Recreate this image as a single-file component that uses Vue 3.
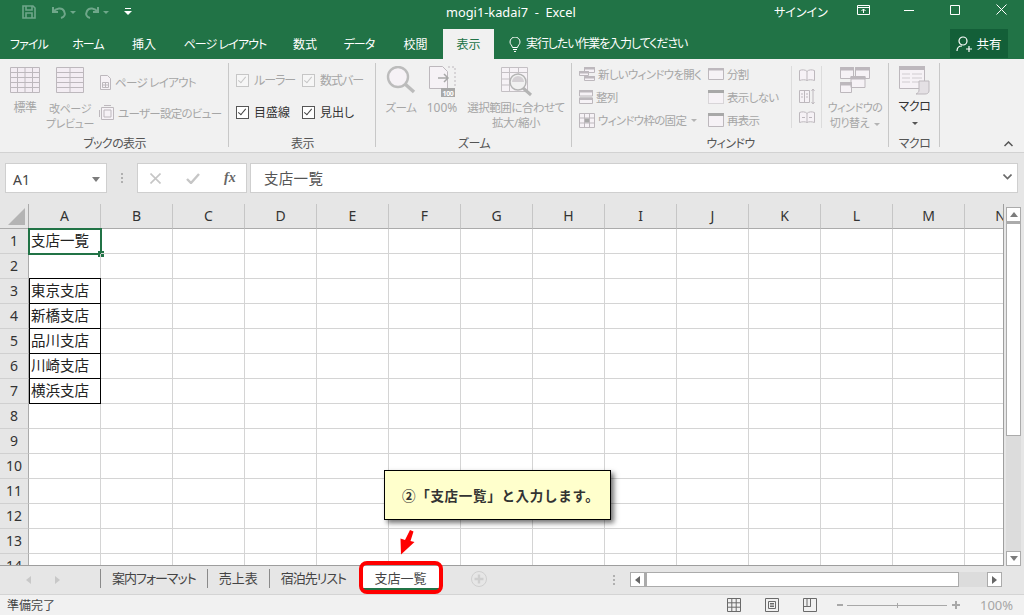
<template>
  <div class="window">
    <!-- title bar -->
    <div class="titlebar">
      <div class="qat">
        <svg class="qat-save" width="16" height="16" viewBox="0 0 16 16" fill="none" stroke="#6fa78a" stroke-width="1.6">
          <path d="M2 2h10l2 2v10H2z" />
          <path d="M5 2v4h6V2M5 14V9h6v5" />
        </svg>
        <svg class="qat-undo" width="16" height="14" viewBox="0 0 16 14" fill="none" stroke="#6fa78a" stroke-width="2">
          <path d="M2 2v5h5M2 7c3-4 9-5 11-1s0 6-3 7" />
        </svg>
        <span class="qat-caret"></span>
        <svg class="qat-redo" width="16" height="14" viewBox="0 0 16 14" fill="none" stroke="#6fa78a" stroke-width="2">
          <path d="M14 2v5H9M14 7c-3-4-9-5-11-1s0 6 3 7" />
        </svg>
        <span class="qat-caret"></span>
        <svg class="qat-more" width="8" height="8" viewBox="0 0 8 8" fill="#fff">
          <path d="M1 0h6v1H1zM0 3h8L4 7z" />
        </svg>
      </div>
      <div class="doc-title">mogi1-kadai7&nbsp; -&nbsp; Excel</div>
      <div class="signin">サインイン</div>
      <div class="win-buttons">
        <svg width="13" height="10" viewBox="0 0 13 10" fill="none" stroke="#fff">
          <path d="M.5.5h12v9H.5zM.5 2.5h12M6.5 8V4M4.5 6l2-2 2 2" />
        </svg>
        <svg class="win-min" width="11" height="10" viewBox="0 0 11 10" stroke="#fff"><path d="M0 5.5h10" /></svg>
        <svg class="win-max" width="10" height="10" viewBox="0 0 10 10" fill="none" stroke="#fff"><path d="M.5.5h9v9h-9z" /></svg>
        <svg class="win-close" width="11" height="11" viewBox="0 0 11 11" stroke="#fff"><path d="M.5.5l10 10M10.5.5l-10 10" /></svg>
      </div>
    </div>

    <!-- ribbon tabs -->
    <div class="tabs">
      <div
        v-for="t in ribbonTabs"
        :key="t.name"
        class="tab"
        :class="{ active: t.active, kana: t.kana }"
        :style="{ width: t.w + 'px' }"
      >{{ t.name }}</div>
      <svg class="bulb" width="12" height="15" viewBox="0 0 12 15" fill="none" stroke="#fff">
        <path d="M3.5 10.5C3 8 1 7.5 1 5a5 5 0 0 1 10 0c0 2.5-2 3-2.500 5.5zM4 12.5h4M5 14.5h2" />
      </svg>
      <div class="tell-me">実行したい作業を入力してください</div>
      <div class="share">
        <svg width="16" height="16" viewBox="0 0 16 16" fill="none" stroke="#fff" stroke-width="1.2">
          <circle cx="7" cy="5" r="4" />
          <path d="M1 15c0-3 2-5 5-5M10 13h6M13 10v6" />
        </svg>
        <span>共有</span>
      </div>
    </div>

    <!-- ribbon -->
    <div class="ribbon">
      <div class="group g-book">
        <div class="group-body">
          <div class="big b-normal">
            <svg width="30" height="26" viewBox="0 0 30 26" fill="#f3edf3" stroke="#bdb8bd">
              <path d="M.5.5h29v25H.5zM.5 5.500h29M.5 10.500h29M.5 15.500h29M.5 20.500h29M7.500.5v25M15 .5v25M22.500.5v25" />
            </svg>
            <span>標準</span>
          </div>
          <div class="big b-break">
            <svg width="28" height="26" viewBox="0 0 28 26" fill="#f3edf3" stroke="#bdb8bd">
              <path d="M.5.5h27v25H.5zM.5 5.500h27M.5 10.500h27M.5 15.500h27M.5 20.500h27M14 .5v25" />
            </svg>
            <span>改ページ<br />プレビュー</span>
          </div>
          <div class="small-col book-col">
            <div class="small">
              <svg width="13" height="15" viewBox="0 0 13 15" fill="#f6f2f6" stroke="#bdb8bd">
                <path d="M1.500.5h7l3 3v11h-10zM3.500 7.500h6v5h-6zM6.500 7.500v5M3.500 10h6" />
              </svg>
              <span>ページ レイアウト</span>
            </div>
            <div class="small">
              <svg width="16" height="16" viewBox="0 0 16 16" fill="#f6f2f6" stroke="#bdb8bd">
                <path d="M2.500 2.500h12v12h-12zM5 5h7v7H5zM.5 5v7M5 .5h7" />
              </svg>
              <span>ユーザー設定のビュー</span>
            </div>
          </div>
        </div>
        <div class="group-label">ブックの表示</div>
      </div>

      <div class="group g-show">
        <div class="group-body check-grid">
          <div class="check off"><i></i><span>ルーラー</span></div>
          <div class="check off"><i></i><span>数式バー</span></div>
          <div class="check"><i></i><span>目盛線</span></div>
          <div class="check"><i></i><span>見出し</span></div>
        </div>
        <div class="group-label">表示</div>
      </div>

      <div class="group g-zoom">
        <div class="group-body">
          <div class="big b-zoom">
            <svg width="30" height="28" viewBox="0 0 30 28" fill="#f6f2f6" stroke="#bcbcbc">
              <circle cx="12" cy="11" r="10" stroke-width="2.4" />
              <path d="M19 18l9 8" stroke-width="3.4" />
            </svg>
            <span>ズーム</span>
          </div>
          <div class="big b-hundred">
            <svg width="27" height="31" viewBox="0 0 27 31" fill="#f6f2f6" stroke="#bdb8bd">
              <path d="M.5.5h13l5 5v17H.5z" />
              <path d="M19 1h7v20" fill="none" stroke-dasharray="2 2" />
              <path d="M9 12h10M15 8l4 4-4 4" fill="none" stroke="#a8a8a8" stroke-width="1.5" />
              <rect x="12" y="22" width="14" height="9" fill="#a8a8a8" stroke="none" />
              <text x="19" y="29.5" text-anchor="middle" class="mini-num">100</text>
            </svg>
            <span>100%</span>
          </div>
          <div class="big b-fit">
            <svg width="32" height="30" viewBox="0 0 32 30" fill="#f6f2f6" stroke="#c4c0c4">
              <path d="M.5.5h26v24H.5zM.5 5.500h26M.5 12h8M.5 18h8M8.500.5v24M17.500.5v6" />
              <circle cx="17" cy="15" r="8" fill="#f1f1f1" stroke="#b4b4b4" stroke-width="1.5" />
              <path d="M11 15a6 6 0 0 1 12 0z" fill="#d4d0d4" stroke="none" />
              <path d="M22 21l8 7" stroke="#b4b4b4" stroke-width="3" />
            </svg>
            <span>選択範囲に合わせて<br />拡大/縮小</span>
          </div>
        </div>
        <div class="group-label">ズーム</div>
      </div>

      <div class="group g-window">
        <div class="group-body">
          <div class="small-col win-col-a">
            <div class="small">
              <svg width="16" height="14" viewBox="0 0 16 14" fill="#f6f2f6" stroke="#bdb8bd">
                <path d="M5.500.5h10v5h-10zM.5 4.500h9v4h-9zM5.500 9.500h10v4h-10z" />
                <path d="M5.500.5h10V2h-10zM.5 4.500h9V6h-9zM5.500 9.500h10V11h-10z" fill="#bdb8bd" />
              </svg>
              <span>新しいウィンドウを開く</span>
            </div>
            <div class="small">
              <svg width="14" height="14" viewBox="0 0 14 14" fill="#f6f2f6" stroke="#bdb8bd">
                <path d="M.5.5h13V6H.5zM.5 8h13v5.500H.5z" />
                <path d="M.5.5h13V2H.5zM.5 8h13v1.500H.5z" fill="#bdb8bd" />
              </svg>
              <span>整列</span>
            </div>
            <div class="small">
              <svg width="16" height="15" viewBox="0 0 16 15" fill="#f6f2f6" stroke="#bdb8bd">
                <path d="M.5.5h15v14H.5zM.5 5h15M.5 10h15M5.500.5v14M10.500.5v14" />
                <rect x="6" y="5.5" width="4" height="4" fill="#a8a8a8" stroke="none" />
              </svg>
              <span>ウィンドウ枠の固定</span>
              <b class="caret"></b>
            </div>
          </div>
          <div class="small-col win-col-b">
            <div class="small">
              <svg width="16" height="12" viewBox="0 0 16 12" fill="#f6f2f6" stroke="#bdb8bd">
                <path d="M.5.5h15v11H.5z" />
                <path d="M.5.5h15V2H.5z" fill="#bdb8bd" />
              </svg>
              <span>分割</span>
            </div>
            <div class="small">
              <svg width="16" height="14" viewBox="0 0 16 14" fill="#f6f2f6" stroke="#bdb8bd">
                <path d="M.5 3.500v10h15v-10" stroke-dasharray="1 1" />
                <rect x="0" y="0" width="16" height="3" fill="#a8a8a8" stroke="none" />
              </svg>
              <span>表示しない</span>
            </div>
            <div class="small">
              <svg width="16" height="14" viewBox="0 0 16 14" fill="#f6f2f6" stroke="#bdb8bd">
                <path d="M.5.5h15v13H.5z" />
                <rect x="0" y="0" width="16" height="3" fill="#a8a8a8" stroke="none" />
              </svg>
              <span>再表示</span>
            </div>
          </div>
          <div class="mini-col">
            <svg width="16" height="12" viewBox="0 0 16 12" fill="#f6f2f6" stroke="#bdb8bd">
              <path d="M8 2.500C6.500.5 3 .5.500 1.500v10C3 10.500 6.500 10.500 8 11.500c1.500-1 5-1 7.500 0v-10C13 .5 9.500.5 8 2.500zM8 2.500v9" />
            </svg>
            <svg width="16" height="17" viewBox="0 0 16 17" fill="#f6f2f6" stroke="#bdb8bd">
              <path d="M.5 2.500h10v12H.5zM5.500 2.500v12M2 6h2M7 6h2M2 9h2M7 9h2M14 1v15M12.500 3L14 1l1.500 2M12.500 14l1.500 2 1.500-2" />
            </svg>
            <svg width="16" height="12" viewBox="0 0 16 12" fill="#f6f2f6" stroke="#bdb8bd">
              <path d="M8 2.500C6.500.5 3 .5.500 1.500v10C3 10.500 6.500 10.500 8 11.500c1.500-1 5-1 7.500 0v-10C13 .5 9.500.5 8 2.500zM8 2.500v9M3 6.500h3M10 6.500h3" />
            </svg>
          </div>
          <div class="big b-switch">
            <svg width="30" height="26" viewBox="0 0 30 26" fill="#f6f2f6" stroke="#bdb8bd">
              <path d="M.5.5h13v11H.5zM15.500.5h14v11h-14zM.5 15.500h11v10H.5zM11 9.500h14v11H11z" />
              <path d="M.5.5h13V3H.5zM15.500.5h14V3h-14zM.5 15.500h11V18H.5zM11 9.500h14V12H11z" fill="#bdb8bd" />
            </svg>
            <span>ウィンドウの<br />切り替え<b class="caret"></b></span>
          </div>
        </div>
        <div class="group-label">ウィンドウ</div>
      </div>

      <div class="group g-macro">
        <div class="group-body">
          <div class="big b-macro">
            <svg width="31" height="29" viewBox="0 0 31 29" fill="#f6f2f6" stroke="#bdb8bd">
              <path d="M.5.5h25v22H.5z" />
              <rect x="0" y="0" width="26" height="4" fill="#bdb8bd" stroke="none" />
              <path d="M3 8h8M13 8h10M3 12h8M13 12h10M3 16h8M13 16h10" stroke="#d0ccd0" />
              <path d="M20 15h10v10c0 2-2 3-4 3h-9c2-1 3-2 3-4z" fill="#e4e0e4" />
            </svg>
            <span class="dark">マクロ</span>
            <b class="caret dark-caret"></b>
          </div>
        </div>
        <div class="group-label">マクロ</div>
      </div>

      <svg class="collapse" width="9" height="6" viewBox="0 0 9 6" fill="none" stroke="#555" stroke-width="1.5"><path d="M.5 5l4-4 4 4" /></svg>
    </div>

    <!-- formula bar -->
    <div class="formula-bar">
      <div class="name-box">
        <span>A1</span>
        <b class="caret big-caret"></b>
      </div>
      <div class="dots"><i></i><i></i><i></i></div>
      <div class="fx-box">
        <svg width="11" height="11" viewBox="0 0 11 11" stroke="#c6c6c6" stroke-width="1.6"><path d="M.5.5l10 10M10.5.5l-10 10" /></svg>
        <svg width="14" height="11" viewBox="0 0 14 11" fill="none" stroke="#c6c6c6" stroke-width="2.4"><path d="M1 6l4 4 8-9" /></svg>
        <span class="fx">fx</span>
      </div>
      <div class="formula-input">
        <span>支店一覧</span>
        <svg width="9" height="6" viewBox="0 0 9 6" fill="none" stroke="#6a6a6a" stroke-width="1.6"><path d="M.5.5l4 4 4-4" /></svg>
      </div>
    </div>

    <!-- sheet -->
    <div class="sheet-area">
      <div class="sheet">
        <div class="corner"><i></i></div>
        <div v-for="c in columns" :key="c" class="col-head">{{ c }}</div>
        <template v-for="(row, i) in rows" :key="i">
          <div class="row-head">{{ i + 1 }}</div>
          <div
            v-for="(c, j) in columns"
            :key="c"
            class="cell"
            :class="{ boxed: j === 0 && row !== '' && i > 0 }"
          >
            <template v-if="j === 0">{{ row }}</template>
            <div v-if="j === 0 && i === 0" class="selection"><b></b></div>
          </div>
        </template>
      </div>
      <div class="v-scroll">
        <div class="v-btn"><b class="tri-up"></b></div>
        <div class="v-thumb"></div>
        <div class="v-track"></div>
        <div class="v-btn"><b class="caret big-caret"></b></div>
      </div>
      <div class="callout">②「支店一覧」と入力します。</div>
      <svg class="red-arrow" width="16" height="25" viewBox="0 0 16 25" fill="#ff0000">
        <path d="M11 0l3.500 1.500-3 9.500 4 1L2 24.500 1.500 8.500 6 10z" />
      </svg>
    </div>

    <!-- sheet tabs -->
    <div class="sheet-tabs">
      <div class="nav">
        <b class="tri-left"></b>
        <b class="tri-right"></b>
      </div>
      <div v-for="s in sheets" :key="s.name" class="sheet-tab" :class="{ kana: s.kana }">{{ s.name }}</div>
      <div class="sheet-tab current">支店一覧</div>
      <svg class="add" width="16" height="16" viewBox="0 0 16 16" fill="none" stroke="#cfcfcf">
        <circle cx="8" cy="8" r="7.5" />
        <path d="M8 3.500v9M3.500 8h9" stroke-width="2.4" />
      </svg>
      <div class="dots tab-dots"><i></i><i></i><i></i></div>
      <div class="h-scroll">
        <div class="h-btn"><b class="tri-left"></b></div>
        <div class="h-thumb"></div>
        <div class="h-track"></div>
        <div class="h-btn"><b class="tri-right"></b></div>
      </div>
      <div class="red-box"></div>
    </div>

    <!-- status bar -->
    <div class="status">
      <span class="ready">準備完了</span>
      <div class="status-right">
        <svg width="14" height="14" viewBox="0 0 14 14" fill="none" stroke="#6a6a6a">
          <path d="M.5.5h13v13H.5zM.5 4.800h13M.5 9.200h13M4.800.5v13M9.200.5v13" />
        </svg>
        <svg width="14" height="14" viewBox="0 0 14 14" fill="none" stroke="#6a6a6a">
          <path d="M.5.5h13v13H.5zM3.500 3.500h7v7h-7zM5 5.500h4M5 7h4M5 8.500h4" />
        </svg>
        <svg width="14" height="14" viewBox="0 0 14 14" fill="none" stroke="#6a6a6a">
          <path d="M.5.5h13v13H.5zM.5 8.500h7V.5M7.500.5v8M4 .5v8" />
        </svg>
        <div class="zoom-slider">
          <i class="minus"></i>
          <div class="track"><b></b></div>
          <i class="plus"></i>
        </div>
        <span class="percent">100%</span>
      </div>
    </div>
  </div>
</template>

<script setup>
const ribbonTabs = [
  { name: 'ファイル', w: 58, kana: true },
  { name: 'ホーム', w: 60, kana: true },
  { name: '挿入', w: 52 },
  { name: 'ページ レイアウト', w: 110, kana: true },
  { name: '数式', w: 50 },
  { name: 'データ', w: 58, kana: true },
  { name: '校閲', w: 55 },
  { name: '表示', w: 51, active: true }
]

const columns = ['A', 'B', 'C', 'D', 'E', 'F', 'G', 'H', 'I', 'J', 'K', 'L', 'M', 'N']

const rows = ['支店一覧', '', '東京支店', '新橋支店', '品川支店', '川崎支店', '横浜支店', '', '', '', '', '', '', '']

const sheets = [
  { name: '案内フォーマット', kana: true },
  { name: '売上表' },
  { name: '宿泊先リスト', kana: true }
]
</script>

<style>
html, body {
  margin: 0;
  overflow: hidden;
}
</style>

<style scoped>
.window {
  width: 1024px;
  height: 615px;
  display: flex;
  flex-direction: column;
  position: relative;
  overflow: hidden;
  font-family: "Noto Sans", "Noto Sans CJK JP", sans-serif;
  font-size: 12px;
  color: #444;
  background: #e6e6e6;
}

/* title bar */
.titlebar {
  height: 29px;
  flex: none;
  background: #217346;
  color: #fff;
  display: flex;
  align-items: center;
}
.qat {
  width: 446px;
  display: flex;
  align-items: center;
  padding-left: 21px;
  box-sizing: border-box;
  margin-top: -5px;
}
.qat-undo {
  margin-left: 14px;
}
.qat-redo {
  margin-left: 8px;
}
.qat-caret {
  width: 0;
  height: 0;
  border: 3px solid transparent;
  border-top-color: #6fa78a;
  border-bottom: 0;
  margin-left: 3px;
}
.qat-more {
  margin-left: 15px;
}
.doc-title {
  width: 328px;
  font-size: 12.8px;
  margin-top: -5px;
}
.signin {
  width: 83px;
  font-size: 12px;
  margin-top: -6px;
  font-feature-settings: "palt";
}
.win-buttons {
  display: flex;
  align-items: center;
  margin-top: -10px;
}
.win-min {
  margin-left: 34px;
}
.win-max {
  margin-left: 35px;
}
.win-close {
  margin-left: 36px;
}

/* ribbon tabs */
.tabs {
  height: 30px;
  flex: none;
  background: #217346;
  color: #fff;
  display: flex;
  align-items: flex-end;
  font-size: 12px;
  font-feature-settings: "palt";
}
.tab {
  height: 30px;
  display: flex;
  align-items: center;
  justify-content: center;
  flex: none;
  box-sizing: border-box;
}
.tab.kana {
  letter-spacing: -0.9px;
}
.tab.active {
  background: #f1f1f1;
  color: #217346;
}
.bulb {
  margin-left: 15px;
  margin-bottom: 7px;
  flex: none;
}
.tell-me {
  margin-left: 5px;
  height: 30px;
  line-height: 30px;
  white-space: nowrap;
  width: 424px;
  flex: none;
  letter-spacing: -1.1px;
}
.share {
  width: 58px;
  height: 29px;
  background: #135f38;
  display: flex;
  align-items: center;
  justify-content: center;
  gap: 4px;
  margin-bottom: 1px;
  font-size: 12.5px;
  flex: none;
}

/* ribbon */
.ribbon {
  height: 94px;
  flex: none;
  box-sizing: border-box;
  background: #f1f1f1;
  border-bottom: 1px solid #d2d2d2;
  display: flex;
  position: relative;
  font-size: 11px;
  letter-spacing: -0.4px;
  color: #a6a6a6;
  font-feature-settings: "palt";
}
.group {
  flex: none;
  display: flex;
  flex-direction: column;
  position: relative;
  box-sizing: border-box;
  padding-top: 4px;
}
.group::after {
  content: "";
  position: absolute;
  right: 0;
  top: 4px;
  bottom: 5px;
  width: 1px;
  background: #c8c8c8;
}
.g-book { width: 229px; }
.g-show { width: 147px; }
.g-zoom { width: 196px; }
.g-window { width: 317px; }
.g-macro { width: 51px; }
.group-body {
  flex: 1;
  display: flex;
  min-height: 0;
}
.group-label {
  height: 18px;
  padding-top: 2px;
  line-height: 19px;
  text-align: center;
  color: #555;
  font-size: 12px;
  letter-spacing: -0.6px;
}
.big {
  display: flex;
  flex-direction: column;
  align-items: center;
  text-align: center;
  line-height: 15px;
  flex: none;
}
.big span {
  white-space: nowrap;
}
.big svg {
  flex: none;
}
.b-normal {
  width: 30px;
  margin-left: 10px;
  padding-top: 4px;
}
.b-normal span { margin-top: 7px; font-size: 12px; }
.b-break {
  width: 44px;
  margin-left: 8px;
  padding-top: 4px;
}
.b-break span { margin-top: 8px; }
.small-col {
  display: flex;
  flex-direction: column;
}
.small {
  display: flex;
  align-items: center;
  white-space: nowrap;
  height: 22px;
  flex: none;
  font-size: 11.5px;
  letter-spacing: -0.7px;
}
.book-col {
  margin-left: 7px;
  padding-top: 8px;
  gap: 9px;
}
.book-col .small svg {
  margin-right: 3px;
}
.check-grid {
  display: grid;
  grid-template-columns: 66px 66px;
  grid-auto-rows: 32px;
  padding: 8px 0 0 7px;
  box-sizing: border-box;
  color: #333;
}
.check {
  display: flex;
  align-items: flex-start;
  gap: 5px;
  line-height: 14px;
  padding-top: 3px;
  white-space: nowrap;
  font-size: 12px;
  letter-spacing: 0;
}
.check i {
  width: 13px;
  height: 13px;
  flex: none;
  box-sizing: border-box;
  border: 1px solid #555;
  background: #fff;
  position: relative;
}
.check i::after {
  content: "";
  position: absolute;
  left: 3px;
  top: 0;
  width: 4px;
  height: 8px;
  box-sizing: border-box;
  border: solid #444;
  border-width: 0 1.5px 1.5px 0;
  transform: rotate(40deg);
}
.check.off {
  color: #a6a6a6;
  letter-spacing: -1px;
}
.check.off i {
  border-color: #c6c6c6;
  background: #f6f6f6;
}
.check.off i::after {
  border-color: #c6c6c6;
}
.b-zoom {
  width: 30px;
  margin-left: 10px;
  padding-top: 3px;
}
.b-zoom span { margin-top: 6px; font-size: 11.5px; }
.b-hundred {
  width: 32px;
  margin-left: 10px;
  padding-top: 3px;
}
.b-hundred span { margin-top: 3px; font-size: 12px; letter-spacing: 0; }
.mini-num {
  font-size: 7px;
  fill: #fff;
  stroke: none;
  font-weight: 700;
}
.b-fit {
  width: 100px;
  margin-left: 8px;
  padding-top: 4px;
}
.b-fit svg { margin-left: 2px; }
.b-fit span { margin-top: 3px; font-size: 11.5px; letter-spacing: -0.5px; }
.win-col-a {
  width: 129px;
  margin-left: 7px;
  gap: 1px;
}
.win-col-a .small svg,
.win-col-b .small svg {
  margin-right: 3px;
  flex: none;
}
.win-col-b {
  width: 84px;
  gap: 1px;
}
.caret {
  display: inline-block;
  width: 0;
  height: 0;
  border: 3px solid transparent;
  border-top-color: #b4b4b4;
  border-bottom: 0;
  margin-left: 5px;
  vertical-align: middle;
}
.mini-col {
  width: 31px;
  margin-left: -1px;
  box-sizing: border-box;
  border-left: 1px solid #dcdcdc;
  border-right: 1px solid #dcdcdc;
  display: flex;
  flex-direction: column;
  align-items: center;
  justify-content: space-between;
  padding: 3px 0 5px;
  height: 62px;
  margin-top: 3px;
}
.b-switch {
  width: 66px;
  padding-top: 4px;
}
.b-switch span { margin-top: 7px; }
.b-macro {
  width: 51px;
  padding-top: 3px;
}
.b-macro span { margin-top: 4px; font-size: 12px; }
.b-macro .dark {
  color: #333;
}
.dark-caret {
  border-top-color: #555;
  margin: 8px 0 0;
}
.collapse {
  position: absolute;
  right: 11px;
  bottom: 5px;
}

/* formula bar */
.formula-bar {
  height: 51px;
  flex: none;
  box-sizing: border-box;
  padding: 10px 6px 11px 5px;
  display: flex;
  font-size: 13px;
}
.name-box,
.fx-box,
.formula-input {
  box-sizing: border-box;
  height: 30px;
  background: #fff;
  border: 1px solid #cfcfcf;
  display: flex;
  align-items: center;
}
.name-box {
  width: 102px;
  padding: 2px 6px 0 7px;
  justify-content: space-between;
  font-family: "Noto Sans", sans-serif;
  font-size: 14px;
  color: #444;
}
.big-caret {
  border-width: 5px 4px 0;
  border-top-color: #7c7c7c;
  margin: 0;
}
.dots {
  width: 30px;
  display: flex;
  flex-direction: column;
  align-items: center;
  justify-content: center;
  gap: 2px;
}
.dots i {
  width: 2px;
  height: 2px;
  background: #b0b0b0;
}
.fx-box {
  width: 110px;
  padding-left: 12px;
  gap: 25px;
}
.fx {
  font-family: "Liberation Serif", serif;
  font-style: italic;
  font-weight: 700;
  font-size: 14px;
  color: #666;
  margin-left: -1px;
}
.formula-input {
  flex: 1;
  margin-left: 3px;
  padding: 0 5px 2px 13px;
  justify-content: space-between;
  color: #555;
  font-size: 14.5px;
  letter-spacing: 0.3px;
}

/* sheet */
.sheet-area {
  height: 362px;
  flex: none;
  display: flex;
  position: relative;
}
.sheet {
  width: 1004px;
  flex: none;
  height: 362px;
  overflow: hidden;
  display: grid;
  grid-template-columns: 29px repeat(14, 72px);
  grid-auto-rows: 25px;
  background: #fff;
  font-size: 14px;
  color: #222;
  border-right: 1px solid #9e9e9e;
  border-bottom: 1px solid #9e9e9e;
  box-sizing: border-box;
}
.corner {
  background: #e6e6e6;
  border-bottom: 1px solid #ababab;
  border-right: 1px solid #ababab;
  box-sizing: border-box;
  position: relative;
}
.corner i {
  position: absolute;
  right: 3px;
  bottom: 3px;
  width: 0;
  height: 0;
  border-style: solid;
  border-width: 0 0 17px 17px;
  border-color: transparent transparent #b4b4b4 transparent;
}
.col-head {
  background: #e6e6e6;
  border-right: 1px solid #c6c6c6;
  border-bottom: 1px solid #ababab;
  box-sizing: border-box;
  text-align: center;
  line-height: 24px;
  font-family: "Noto Sans", sans-serif;
  font-size: 14px;
  color: #333;
  white-space: nowrap;
}
.row-head {
  background: #e6e6e6;
  border-right: 1px solid #ababab;
  border-bottom: 1px solid #d0d0d0;
  box-sizing: border-box;
  text-align: center;
  line-height: 24px;
  font-family: "Noto Sans", sans-serif;
  color: #333;
}
.cell {
  border-right: 1px solid #d4d4d4;
  border-bottom: 1px solid #d4d4d4;
  box-sizing: border-box;
  line-height: 23px;
  padding-left: 2px;
  white-space: nowrap;
  position: relative;
  font-size: 14.5px;
}
.cell.boxed {
  border: solid #000;
  border-width: 0 1px 1px 1px;
  box-shadow: 0 -1px 0 #000;
  padding-left: 1px;
}
.selection {
  position: absolute;
  left: -1px;
  top: -1px;
  width: 74px;
  height: 27px;
  box-sizing: border-box;
  border: 2px solid #217346;
}
.selection b {
  position: absolute;
  right: -4px;
  bottom: -4px;
  width: 6px;
  height: 6px;
  background: #217346;
}

/* vertical scrollbar */
.v-scroll {
  width: 15px;
  margin-left: 2px;
  padding-top: 3px;
  display: flex;
  flex-direction: column;
  flex: none;
}
.v-btn {
  height: 15px;
  flex: none;
  box-sizing: border-box;
  background: #fff;
  border: 1px solid #ababab;
  display: flex;
  align-items: center;
  justify-content: center;
}
.tri-up {
  width: 0;
  height: 0;
  border-style: solid;
  border-width: 0 4px 5px;
  border-color: transparent transparent #7c7c7c;
}
.v-thumb {
  height: 214px;
  flex: none;
  box-sizing: border-box;
  background: #fff;
  border: 1px solid #ababab;
  border-top-width: 2px;
}
.v-track {
  flex: 1;
  background: #dcdcdc;
}

.callout {
  position: absolute;
  left: 384px;
  top: 266px;
  width: 227px;
  height: 50px;
  box-sizing: border-box;
  background: #ffffcc;
  border: 1px solid #000;
  box-shadow: 3px 3px 5px rgba(0, 0, 0, 0.55);
  font-size: 13.5px;
  letter-spacing: 0.7px;
  font-weight: 700;
  color: #333;
  display: flex;
  align-items: center;
  padding-left: 17px;
  white-space: nowrap;
}
.red-arrow {
  position: absolute;
  left: 399px;
  top: 326px;
}

/* sheet tabs */
.sheet-tabs {
  height: 28px;
  flex: none;
  display: flex;
  position: relative;
  background: #e6e6e6;
  font-size: 13px;
  color: #444;
  font-feature-settings: "palt";
}
.nav {
  width: 100px;
  flex: none;
  box-sizing: border-box;
  display: flex;
  align-items: center;
  padding: 0 0 0 26px;
  gap: 24px;
}
.tri-left,
.tri-right {
  width: 0;
  height: 0;
  border-style: solid;
  border-color: transparent;
}
.tri-left {
  border-width: 4px 5px 4px 0;
  border-right-color: #c8c8c8;
}
.tri-right {
  border-width: 4px 0 4px 5px;
  border-left-color: #c8c8c8;
}
.h-btn .tri-left { border-right-color: #666; }
.h-btn .tri-right { border-left-color: #666; }
.sheet-tab {
  flex: none;
  height: 19px;
  line-height: 19px;
  margin-top: 3px;
  padding: 0 11px;
  border-left: 1px solid #8a8a8a;
  white-space: nowrap;
}
.sheet-tab.kana {
  letter-spacing: -1px;
}
.sheet-tab.current {
  height: 24px;
  margin: 0 0 0 4px;
  line-height: 24px;
  width: 79px;
  box-sizing: border-box;
  padding: 0;
  text-align: center;
  background: #fff;
  border-left: 0;
  border-bottom: 2px solid #217346;
}
.add {
  margin: 5px 0 0 31px;
  flex: none;
}
.tab-dots {
  width: 30px;
  margin-left: 112px;
  flex: none;
  height: 14px;
  margin-top: 7px;
}
.h-scroll {
  margin-left: 1px;
  margin-top: 6px;
  height: 15px;
  width: 372px;
  flex: none;
  display: flex;
}
.h-btn {
  width: 15px;
  flex: none;
  height: 15px;
  box-sizing: border-box;
  background: #fff;
  border: 1px solid #ababab;
  display: flex;
  align-items: center;
  justify-content: center;
}
.h-thumb {
  width: 314px;
  flex: none;
  box-sizing: border-box;
  background: #fff;
  border: 1px solid #ababab;
  border-left-width: 2px;
}
.h-track {
  flex: 1;
  background: #dcdcdc;
}
.red-box {
  position: absolute;
  left: 359px;
  top: -5px;
  width: 84px;
  height: 33px;
  box-sizing: border-box;
  border: 4px solid #ff0000;
  border-radius: 8px;
}

/* status bar */
.status {
  flex: 1;
  box-sizing: border-box;
  background: #f1f1f1;
  border-top: 1px solid #d4d4d4;
  display: flex;
  align-items: center;
  padding-left: 7px;
  font-size: 12px;
  color: #444;
}
.ready {
  width: 720px;
  flex: none;
}
.status-right {
  display: flex;
  align-items: center;
  gap: 24px;
}
.zoom-slider {
  display: flex;
  align-items: center;
  gap: 3px;
  margin-left: -4px;
}
.minus {
  width: 6px;
  height: 2px;
  background: #a8a8a8;
  margin-right: 1px;
}
.plus {
  width: 8px;
  height: 2px;
  background: #a8a8a8;
  margin-left: 2px;
  position: relative;
}
.plus::after {
  content: "";
  position: absolute;
  left: 3px;
  top: -3px;
  width: 2px;
  height: 8px;
  background: #a8a8a8;
}
.track {
  width: 100px;
  height: 1px;
  background: #a8a8a8;
  position: relative;
}
.track b {
  position: absolute;
  left: 50px;
  top: -2px;
  width: 1px;
  height: 5px;
  background: #a8a8a8;
}
.percent {
  color: #a6a6a6;
  font-size: 13px;
  margin-left: -4px;
}
</style>
